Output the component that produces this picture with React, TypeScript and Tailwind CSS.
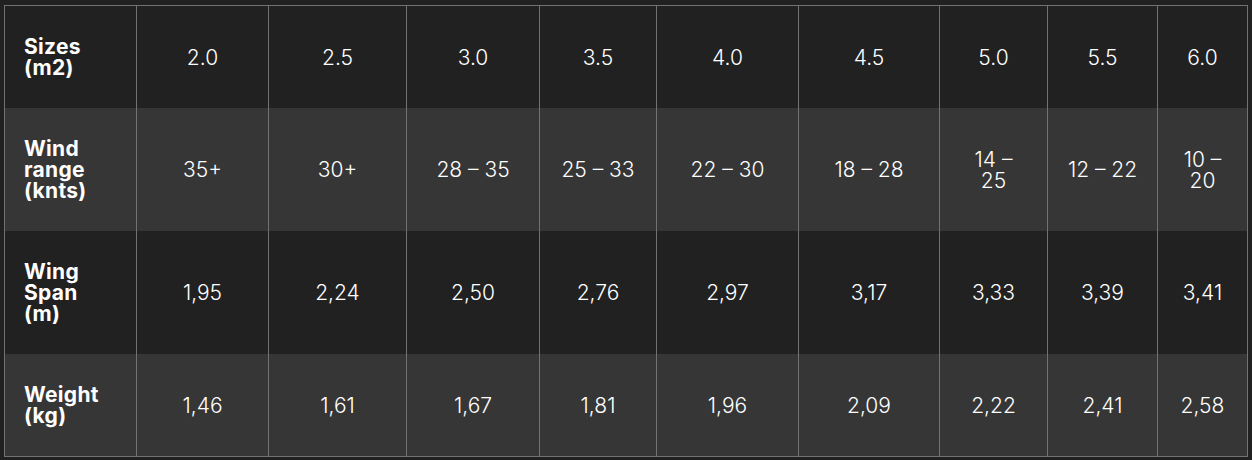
import React from "react";

const rows: { label: string[]; values: (string | string[])[]; dark: boolean }[] = [
  { label: ["Sizes", "(m2)"], values: ["2.0", "2.5", "3.0", "3.5", "4.0", "4.5", "5.0", "5.5", "6.0"], dark: true },
  {
    label: ["Wind", "range", "(knts)"],
    values: ["35+", "30+", "28 – 35", "25 – 33", "22 – 30", "18 – 28", ["14 –", "25"], "12 – 22", ["10 –", "20"]],
    dark: false,
  },
  { label: ["Wing", "Span", "(m)"], values: ["1,95", "2,24", "2,50", "2,76", "2,97", "3,17", "3,33", "3,39", "3,41"], dark: true },
  { label: ["Weight", "(kg)"], values: ["1,46", "1,61", "1,67", "1,81", "1,96", "2,09", "2,22", "2,41", "2,58"], dark: false },
];

export default function App() {
  return (
    <div className="w-[1252px] h-[460px] bg-[#212121] pl-[4px] pt-[5px]" style={{ fontFamily: "Inter, 'Open Sans', sans-serif" }}>
      <div className="w-[1244px] border border-[#727272] grid grid-cols-[131px_132px_138px_133px_117px_142px_141px_108px_110px_90px]">
        {rows.map((row, ri) => (
          <React.Fragment key={ri}>
            <div
              className={`${row.dark ? "bg-[#212121]" : "bg-[#363636]"} flex items-center pl-[19px] py-[30px] text-white font-bold text-[21px] leading-[21px] tracking-[0.3px]`}
            >
              <div>
                {row.label.map((l, i) => (
                  <div key={i}>{l}</div>
                ))}
              </div>
            </div>
            {row.values.map((v, vi) => (
              <div
                key={vi}
                className={`${row.dark ? "bg-[#212121]" : "bg-[#363636]"} border-l border-[#727272] flex items-center justify-center text-center text-white font-light text-[21px] leading-[21px]`}
              >
                {Array.isArray(v) ? (
                  <div>
                    {v.map((t, i) => (
                      <div key={i}>{t}</div>
                    ))}
                  </div>
                ) : (
                  v
                )}
              </div>
            ))}
          </React.Fragment>
        ))}
      </div>
    </div>
  );
}
